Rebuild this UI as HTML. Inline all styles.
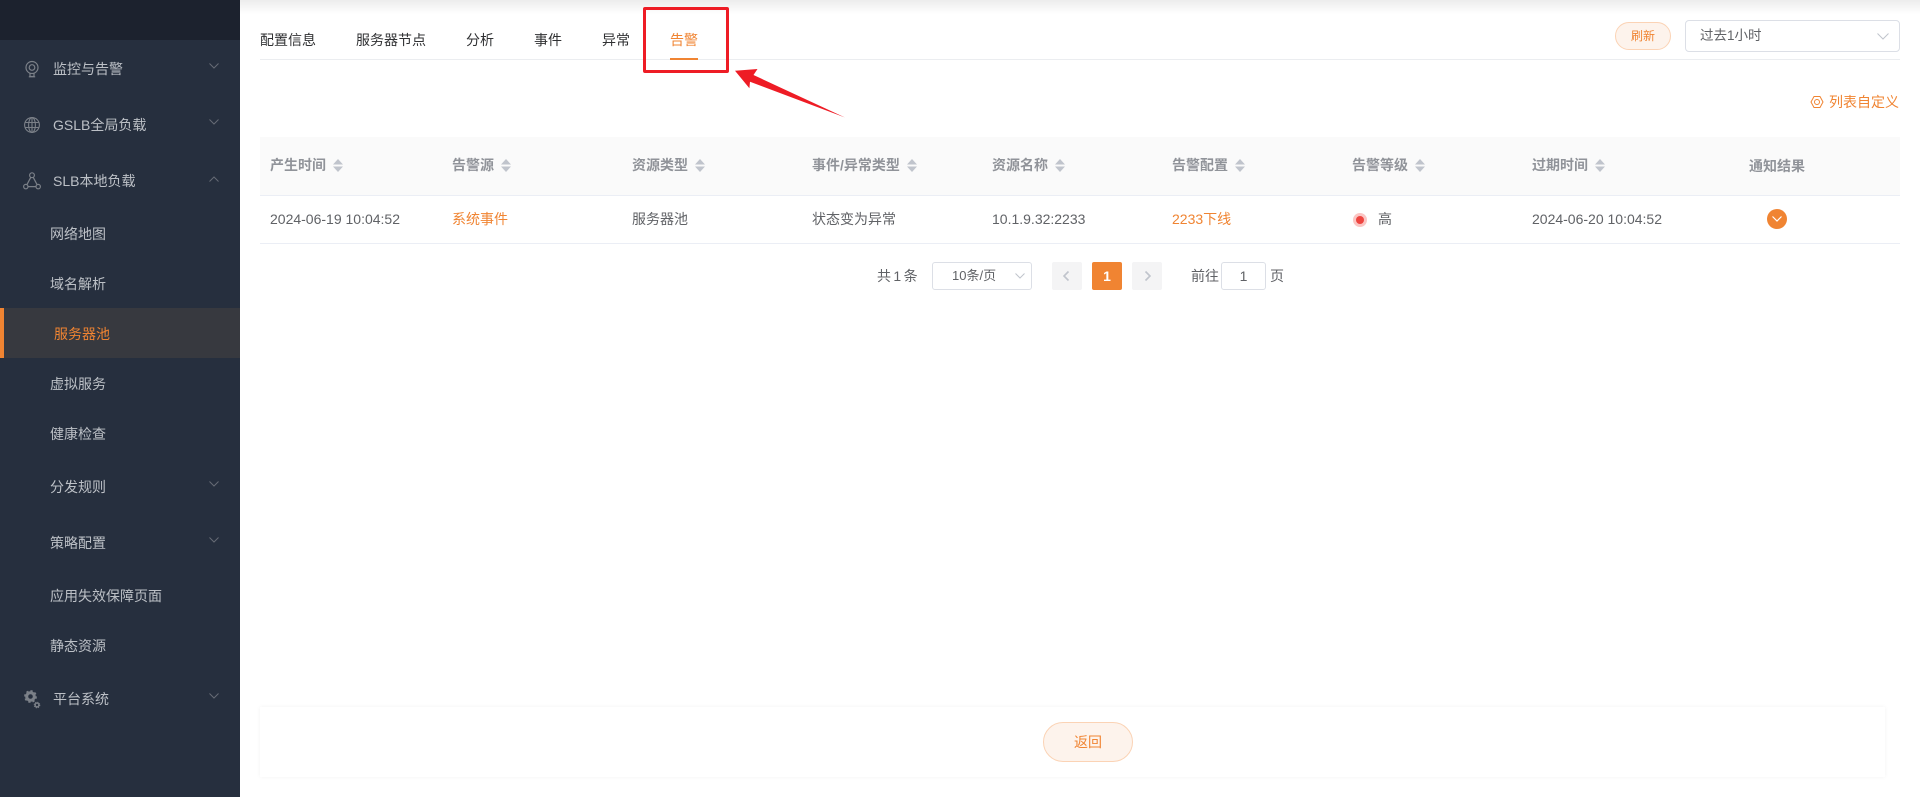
<!DOCTYPE html>
<html lang="zh-CN">
<head>
<meta charset="utf-8">
<title>告警</title>
<style>
html,body{margin:0;padding:0;background:#fff;}
body{width:1920px;height:797px;position:relative;overflow:hidden;font-family:"Liberation Sans","Noto Sans CJK SC",sans-serif;font-size:14px;color:#606266;}
.a{position:absolute;}
.t{position:absolute;line-height:20px;height:20px;white-space:nowrap;}
.n{color:#bcc0c6;}
.tab{color:#303133;top:30px;}
.h{color:#909399;font-weight:700;top:155px;}
.r{top:209px;}
.o{color:#f08432;}
svg{position:absolute;display:block;overflow:visible;}
</style>
</head>
<body>
<!-- sidebar -->
<div class="a" style="left:0;top:0;width:240px;height:797px;background:#262f3e;"></div>
<div class="a" style="left:0;top:0;width:240px;height:40px;background:#1c222e;"></div>
<div class="a" style="left:0;top:308px;width:240px;height:50px;background:#37393f;"></div>
<div class="a" style="left:0;top:308px;width:4px;height:50px;background:#f08432;"></div>

<div class="t n" style="left:53px;top:59px;">监控与告警</div>
<div class="t n" style="left:53px;top:115px;">GSLB全局负载</div>
<div class="t n" style="left:53px;top:171px;">SLB本地负载</div>
<div class="t n" style="left:50px;top:224px;">网络地图</div>
<div class="t n" style="left:50px;top:274px;">域名解析</div>
<div class="t o" style="left:54px;top:324px;">服务器池</div>
<div class="t n" style="left:50px;top:374px;">虚拟服务</div>
<div class="t n" style="left:50px;top:424px;">健康检查</div>
<div class="t n" style="left:50px;top:477px;">分发规则</div>
<div class="t n" style="left:50px;top:533px;">策略配置</div>
<div class="t n" style="left:50px;top:586px;">应用失效保障页面</div>
<div class="t n" style="left:50px;top:636px;">静态资源</div>
<div class="t n" style="left:53px;top:689px;">平台系统</div>

<!-- sidebar icons -->
<svg style="left:24px;top:60px;" width="18" height="18" viewBox="0 0 18 18" fill="none" stroke="#7b8088" stroke-width="1.2">
<circle cx="8" cy="7.5" r="6"/><circle cx="8" cy="7.5" r="2.8"/><path d="M6 13.5v3h4v-3M4.8 16.8h6.400"/>
</svg>
<svg style="left:24px;top:117px;" width="16" height="16" viewBox="0 0 16 16" fill="none" stroke="#7b8088" stroke-width="1.1">
<circle cx="8" cy="8" r="7.4"/><ellipse cx="8" cy="8" rx="3.4" ry="7.4"/><path d="M8 .6v14.800M1 5.500h14M1 10.500h14"/>
</svg>
<svg style="left:23px;top:172px;" width="18" height="18" viewBox="0 0 18 18" fill="none" stroke="#7b8088" stroke-width="1.2">
<circle cx="9" cy="3.2" r="2.4"/><circle cx="2.8" cy="14.6" r="2.2"/><circle cx="15.2" cy="14.6" r="2.2"/><path d="M7.800 5.300L3.900 12.700M10.200 5.300l3.900 7.400M5 14.600h8"/>
</svg>
<svg style="left:24px;top:690px;" width="18" height="20" viewBox="0 0 18 20">
<circle cx="6.500" cy="6.500" r="3.800" fill="none" stroke="#7b8088" stroke-width="3"/>
<circle cx="6.500" cy="6.500" r="5.400" fill="none" stroke="#7b8088" stroke-width="2" stroke-dasharray="2.200 2"/>
<circle cx="13" cy="15" r="1.900" fill="none" stroke="#7b8088" stroke-width="1.400"/>
<circle cx="13" cy="15" r="2.800" fill="none" stroke="#7b8088" stroke-width="1" stroke-dasharray="1.200 1"/>
</svg>

<!-- sidebar chevrons -->
<svg style="left:209px;top:63px;" width="10" height="6" fill="none" stroke="#666b75"><path d="M.5.5L5 5 9.500.5"/></svg>
<svg style="left:209px;top:119px;" width="10" height="6" fill="none" stroke="#666b75"><path d="M.5.5L5 5 9.500.5"/></svg>
<svg style="left:209px;top:176px;" width="10" height="6" fill="none" stroke="#666b75"><path d="M.5 5.500L5 1l4.500 4.500"/></svg>
<svg style="left:209px;top:481px;" width="10" height="6" fill="none" stroke="#666b75"><path d="M.5.5L5 5 9.500.5"/></svg>
<svg style="left:209px;top:537px;" width="10" height="6" fill="none" stroke="#666b75"><path d="M.5.5L5 5 9.500.5"/></svg>
<svg style="left:209px;top:693px;" width="10" height="6" fill="none" stroke="#666b75"><path d="M.5.5L5 5 9.500.5"/></svg>

<!-- top shadow -->
<div class="a" style="left:240px;top:0;width:1680px;height:14px;background:linear-gradient(to bottom,#ececec,#fff);"></div>

<!-- tabs -->
<div class="t tab" style="left:260px;">配置信息</div>
<div class="t tab" style="left:356px;">服务器节点</div>
<div class="t tab" style="left:466px;">分析</div>
<div class="t tab" style="left:534px;">事件</div>
<div class="t tab" style="left:602px;">异常</div>
<div class="t tab o" style="left:670px;">告警</div>
<div class="a" style="left:260px;top:59px;width:1640px;height:1px;background:#ebedf0;"></div>
<div class="a" style="left:670px;top:58px;width:28px;height:2px;background:#f08432;"></div>

<!-- red annotation -->
<div class="a" style="left:643px;top:7px;width:80px;height:60px;border:3px solid #ee1c25;border-radius:2px;"></div>
<svg style="left:0;top:0;" width="1920" height="797"><polygon points="735,70.700 757.500,69 753.500,75 845,117.500 750,81.700 749.400,88.300" fill="#ee1c25"/></svg>

<!-- refresh and select -->
<div class="a o" style="left:1615px;top:22px;width:54px;height:26px;border:1px solid #fbd3b5;border-radius:14px;background:#fdf3ec;text-align:center;line-height:26px;font-size:12px;">刷新</div>
<div class="a" style="left:1685px;top:20px;width:213px;height:30px;border:1px solid #dcdfe6;border-radius:4px;background:#fff;"></div>
<div class="t" style="left:1700px;top:26px;font-size:13.500px;">过去1小时</div>
<svg style="left:1877px;top:33px;" width="12" height="7" fill="none" stroke="#c0c4cc"><path d="M.5.5L6 6l5.500-5.500"/></svg>

<!-- customize list -->
<svg style="left:1810px;top:95px;" width="14" height="14" viewBox="0 0 14 14" fill="none" stroke="#f08432" stroke-width="1">
<path d="M4 1.500h6L13 7l-3 5.500H4L1 7z" stroke-linejoin="round"/><circle cx="7" cy="7" r="2.500"/>
</svg>
<div class="t o" style="left:1829px;top:92px;">列表自定义</div>

<!-- table -->
<div class="a" style="left:260px;top:137px;width:1640px;height:58px;background:#fafafa;"></div>
<div class="a" style="left:260px;top:195px;width:1640px;height:1px;background:#ebeef5;"></div>
<div class="a" style="left:260px;top:243px;width:1640px;height:1px;background:#ebeef5;"></div>

<div class="t h" style="left:270px;">产生时间</div>
<div class="t h" style="left:452px;">告警源</div>
<div class="t h" style="left:632px;">资源类型</div>
<div class="t h" style="left:812px;">事件/异常类型</div>
<div class="t h" style="left:992px;">资源名称</div>
<div class="t h" style="left:1172px;">告警配置</div>
<div class="t h" style="left:1352px;">告警等级</div>
<div class="t h" style="left:1532px;">过期时间</div>
<div class="t h" style="left:1749px;top:156px;">通知结果</div>

<svg style="left:333px;top:159px;" width="10" height="13" fill="#c0c4cc"><path d="M5 0l5 5.500H0zM0 7.500h10L5 13z"/></svg>
<svg style="left:501px;top:159px;" width="10" height="13" fill="#c0c4cc"><path d="M5 0l5 5.500H0zM0 7.500h10L5 13z"/></svg>
<svg style="left:695px;top:159px;" width="10" height="13" fill="#c0c4cc"><path d="M5 0l5 5.500H0zM0 7.500h10L5 13z"/></svg>
<svg style="left:907px;top:159px;" width="10" height="13" fill="#c0c4cc"><path d="M5 0l5 5.500H0zM0 7.500h10L5 13z"/></svg>
<svg style="left:1055px;top:159px;" width="10" height="13" fill="#c0c4cc"><path d="M5 0l5 5.500H0zM0 7.500h10L5 13z"/></svg>
<svg style="left:1235px;top:159px;" width="10" height="13" fill="#c0c4cc"><path d="M5 0l5 5.500H0zM0 7.500h10L5 13z"/></svg>
<svg style="left:1415px;top:159px;" width="10" height="13" fill="#c0c4cc"><path d="M5 0l5 5.500H0zM0 7.500h10L5 13z"/></svg>
<svg style="left:1595px;top:159px;" width="10" height="13" fill="#c0c4cc"><path d="M5 0l5 5.500H0zM0 7.500h10L5 13z"/></svg>

<div class="t r" style="left:270px;">2024-06-19 10:04:52</div>
<div class="t r o" style="left:452px;">系统事件</div>
<div class="t r" style="left:632px;">服务器池</div>
<div class="t r" style="left:812px;">状态变为异常</div>
<div class="t r" style="left:992px;">10.1.9.32:2233</div>
<div class="t r o" style="left:1172px;">2233下线</div>
<div class="a" style="left:1353px;top:213px;width:14px;height:14px;border-radius:50%;background:#fbc5c3;"></div>
<div class="a" style="left:1356px;top:216px;width:8px;height:8px;border-radius:50%;background:#ee4540;"></div>
<div class="t r" style="left:1378px;">高</div>
<div class="t r" style="left:1532px;">2024-06-20 10:04:52</div>
<div class="a" style="left:1767px;top:209px;width:20px;height:20px;border-radius:50%;background:#f08432;"></div>
<svg style="left:1772px;top:216px;" width="10" height="6" fill="none" stroke="#fff" stroke-width="1.200"><path d="M.5.5L5 5 9.500.5"/></svg>

<!-- pagination -->
<div class="t" style="left:877px;top:266px;word-spacing:-1.500px;">共 1 条</div>
<div class="a" style="left:932px;top:262px;width:98px;height:26px;border:1px solid #dcdfe6;border-radius:3px;"></div>
<div class="t" style="left:952px;top:266px;font-size:13px;">10条/页</div>
<svg style="left:1015px;top:273px;" width="10" height="6" fill="none" stroke="#c0c4cc"><path d="M.5.5L5 5 9.500.5"/></svg>
<div class="a" style="left:1052px;top:262px;width:30px;height:28px;background:#f4f4f5;border-radius:2px;"></div>
<svg style="left:1063px;top:271px;" width="6" height="10" fill="none" stroke="#c0c4cc" stroke-width="1.600"><path d="M5.500.5L1 5l4.500 4.500"/></svg>
<div class="a" style="left:1092px;top:262px;width:30px;height:28px;background:#f08432;border-radius:2px;color:#fff;font-weight:700;text-align:center;line-height:28px;">1</div>
<div class="a" style="left:1132px;top:262px;width:30px;height:28px;background:#f4f4f5;border-radius:2px;"></div>
<svg style="left:1145px;top:271px;" width="6" height="10" fill="none" stroke="#c0c4cc" stroke-width="1.600"><path d="M.5.5L5 5 .5 9.500"/></svg>
<div class="t" style="left:1191px;top:266px;">前往</div>
<div class="a" style="left:1221px;top:262px;width:43px;height:26px;border:1px solid #dcdfe6;border-radius:3px;text-align:center;line-height:26px;">1</div>
<div class="t" style="left:1270px;top:266px;">页</div>

<!-- bottom card -->
<div class="a" style="left:260px;top:707px;width:1625px;height:70px;background:#fff;box-shadow:0 0 4px rgba(0,0,0,.05);"></div>
<div class="a o" style="left:1043px;top:722px;width:88px;height:38px;border:1px solid #fbd3b5;border-radius:20px;background:#fdf3ec;text-align:center;line-height:38px;">返回</div>
</body>
</html>
